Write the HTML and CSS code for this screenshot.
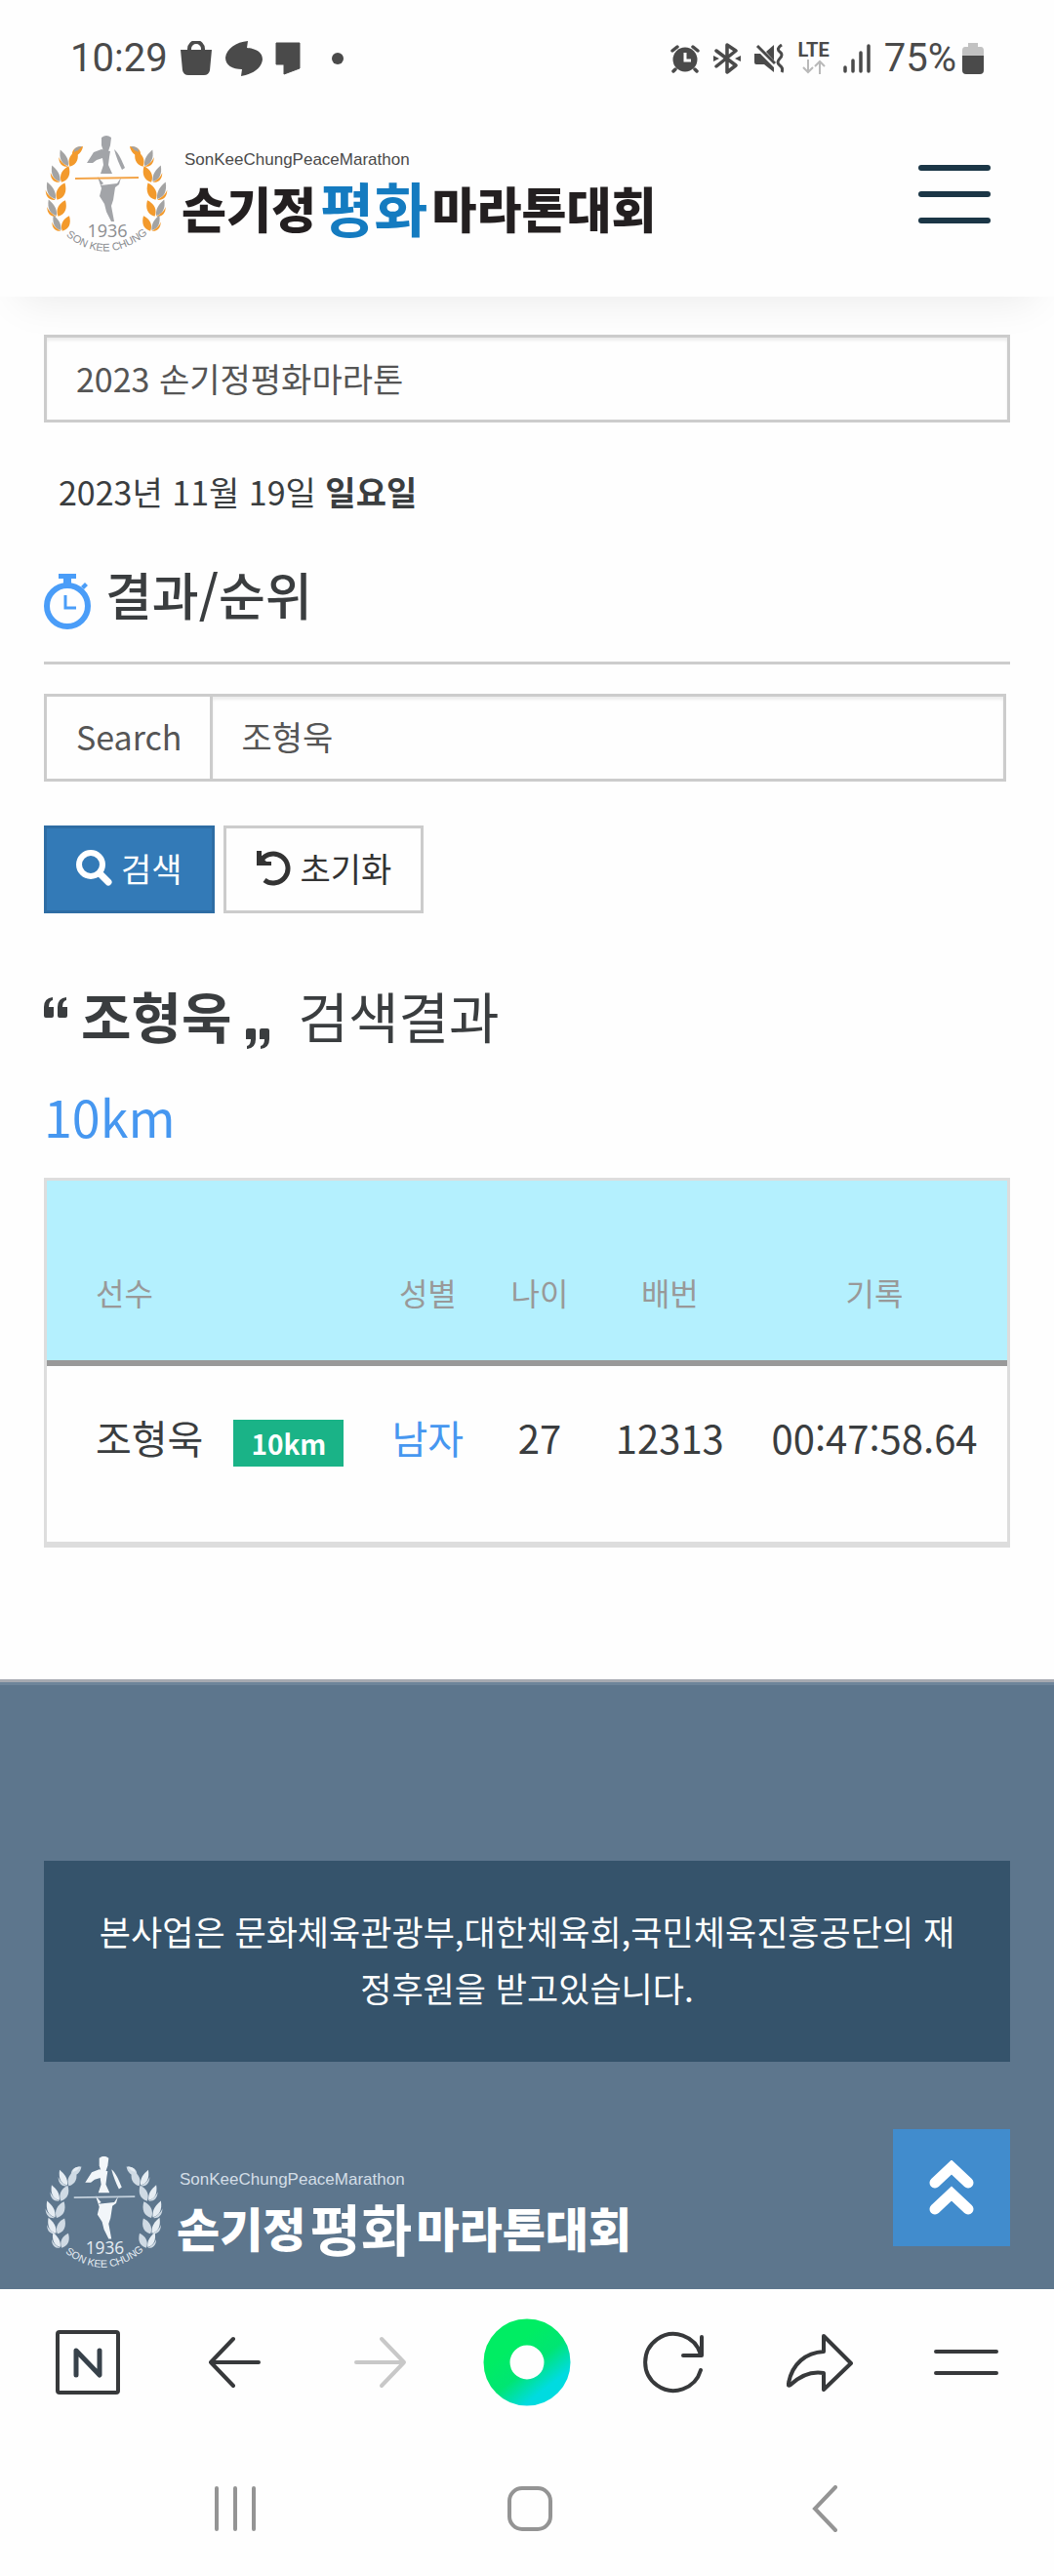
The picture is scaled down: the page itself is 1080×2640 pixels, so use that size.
FILE: index.html
```html
<!DOCTYPE html>
<html lang="ko">
<head>
<meta charset="utf-8">
<meta name="viewport" content="width=device-width, initial-scale=1">
<title>손기정평화마라톤대회</title>
<link rel="stylesheet" href="styles.css">
</head>
<body>

<svg class="defs" aria-hidden="true">
  <symbol id="leaf" viewBox="0 0 26 24" overflow="visible">
    <path d="M13 24C4 22 0 14 2 2C9 8 14 14 13 24Z" fill="var(--leaf-a)"/>
    <path d="M0 12C2 18 7 22 13 25C6 26 0 22 0 12Z" fill="var(--leaf-b)"/>
    <path d="M15 25C11 16 16 7 25 3C28 14 25 22 15 25Z" fill="var(--leaf-b)"/>
  </symbol>
  <symbol id="emblem" viewBox="-1 0 129 120">
    <g id="laurel">
      <path d="M28 21C27 14 32 11 39 11C38 17 34 21 28 21Z" fill="var(--leaf-b)"/>
      <path d="M30 19C29 13 32 11 38 11Z" fill="var(--leaf-a)"/>
      <use href="#leaf" x="14" y="13" width="20" height="18"/>
      <use href="#leaf" x="5" y="29" width="21" height="18"/>
      <use href="#leaf" x="0" y="46" width="22" height="19"/>
      <use href="#leaf" x="1" y="64" width="22" height="18"/>
      <use href="#leaf" x="5" y="80" width="23" height="17"/>
    </g>
    <use href="#laurel" transform="matrix(-1 0 0 1 126 0)"/>
    <g fill="var(--figure)">
      <path d="M58 2Q63-2 68 2L67 10L65 16H60L58 10Z"/>
      <path d="M58 14L67 16L66 22L65 30L69 39H57L60 30L59 23L53 25L49 28L43 28L50 17Z"/>
      <path d="M71 14C76 18 79 26 82 33L79 35C76 29 73 22 71 14Z"/>
      <path d="M54 42L60 49L57 51L74 49L78 43L76 50L72 53L70 66L68 72L71 88H68L63 78L61 70L56 62L58 54Z"/>
    </g>
    <path d="M31 44L96 43" stroke="var(--tape)" stroke-width="2"/>
  </symbol>
  <path id="emblem-arc" d="M21 102Q63 136 106 100" fill="none"/>
</svg>

<div class="status-bar">
  <div class="status-left">
    <span class="status-text">10:29</span>
    <svg width="34" height="36" viewBox="0 0 34 36"><path d="M1 9H33L31 30Q30 35 25 35H9Q4 35 3 30Z" fill="#4a4a4a"/><path d="M10 11V8A7 7 0 0 1 24 8V11" fill="none" stroke="#4a4a4a" stroke-width="4"/></svg>
    <svg width="40" height="38" viewBox="0 0 40 38"><path d="M24 1L23 8C33 9 39 13 39 20C38 29 29 35 17 37L18 30C8 30 1 26 1 18C2 9 12 2 24 1Z" fill="#4a4a4a"/></svg>
    <svg width="26" height="34" viewBox="0 0 26 34"><path d="M1 1H25V27L9 33V23H1Z" fill="#4a4a4a" stroke="#4a4a4a"/></svg>
    <svg class="ic-dot" width="12" height="12" viewBox="0 0 12 12"><circle cx="6" cy="6" r="6" fill="#4a4a4a"/></svg>
  </div>
  <div class="status-right">
    <svg width="30" height="30" viewBox="0 0 30 30"><circle cx="15" cy="16" r="12.500" fill="#4a4a4a"/><path d="M2 7L7 3M28 7L23 3M5 26L3 28M25 26L27 28" stroke="#4a4a4a" stroke-width="3.500" stroke-linecap="round"/><path d="M15 9V17H21" fill="none" stroke="#fff" stroke-width="3"/></svg>
    <svg width="28" height="32" viewBox="0 0 28 32"><path d="M3 8L23 23L14 30V2L23 8L3 24" fill="none" stroke="#4a4a4a" stroke-width="3.500" stroke-linejoin="round" stroke-linecap="round"/><path d="M0 13L6 16L0 19ZM28 13L22 16L28 19Z" fill="#4a4a4a"/></svg>
    <svg width="30" height="30" viewBox="0 0 30 30"><path d="M0 10H6L20 24V29L10 21H2Q0 21 0 19ZM20 1V17L12 8Z" fill="#4a4a4a"/><path d="M3 2L21 20" stroke="#4a4a4a" stroke-width="3"/><path d="M28 1Q22 5 26 8T26 15T26 22T28 29" fill="none" stroke="#4a4a4a" stroke-width="3"/></svg>
    <span class="lte"><span>LTE</span><svg width="24" height="15" viewBox="0 0 24 15"><path d="M6 0V13M1 8L6 13L11 8M18 15V2M13 7L18 2L23 7" fill="none" stroke="#b9b9b9" stroke-width="2"/></svg></span>
    <svg width="28" height="30" viewBox="0 0 28 30"><path d="M2 24V28M10 17V28M18 9V28M26 2V28" stroke="#4a4a4a" stroke-width="3.500" stroke-linecap="round"/></svg>
    <span class="battery"><span class="status-text">75%</span><svg width="22" height="32" viewBox="0 0 22 32"><path d="M6 0H16V4H19Q22 4 22 8V13H0V8Q0 4 3 4H6Z" fill="#c2c2c2"/><path d="M0 13H22V28Q22 32 18 32H4Q0 32 0 28Z" fill="#4a4a4a"/></svg></span>
  </div>
</div>

<header class="site-header">
  <a class="logo logo-color" href="#">
    <svg class="logo-emblem" viewBox="-1 0 129 120" aria-hidden="true">
      <use href="#emblem" x="-1" y="0" width="129" height="120"/>
      <text class="emblem-year" x="64" y="104" text-anchor="middle">1936</text>
      <text class="emblem-name" text-anchor="middle"><textPath href="#emblem-arc" startOffset="50%">SON KEE CHUNG</textPath></text>
    </svg>
    <span class="logo-words">
      <span class="logo-sub">SonKeeChungPeaceMarathon</span>
      <span class="logo-title"><span>손기정</span><span class="logo-accent">평화</span><span>마라톤대회</span></span>
    </span>
  </a>
  <button class="menu-button" type="button" aria-label="메뉴"><span></span><span></span><span></span></button>
</header>

<main>
  <select class="field" aria-label="대회"><option>2023 손기정평화마라톤</option></select>
  <p class="race-date">2023년 11월 19일 <strong>일요일</strong></p>
  <h1 class="page-title">
    <svg width="48" height="57" viewBox="0 0 48 57" aria-hidden="true"><circle cx="24" cy="33" r="21" fill="none" stroke="#4a9df8" stroke-width="6"/><path d="M15 0H33V5H28V11H20V5H15ZM38 13L42 9L45 12L41 16Z" fill="#4a9df8"/><path d="M22 22V35H33" fill="none" stroke="#4a9df8" stroke-width="3"/></svg>
    <span>결과/순위</span>
  </h1>

  <form class="search">
    <div class="search-group">
      <label for="q">Search</label>
      <input id="q" class="field" type="text" value="조형욱">
    </div>
    <div class="actions">
      <button class="btn btn-primary" type="submit"><svg width="37" height="37" viewBox="0 0 37 37" aria-hidden="true"><circle cx="15" cy="15" r="12" fill="none" stroke="#fff" stroke-width="6"/><path d="M24 24L33 33" stroke="#fff" stroke-width="7" stroke-linecap="round"/></svg><span>검색</span></button>
      <button class="btn" type="reset"><svg width="37" height="37" viewBox="0 0 37 37" aria-hidden="true"><path d="M6 10A15 15 0 1 1 9 31" fill="none" stroke="#333" stroke-width="5"/><path d="M1 1H6V7L11 12H16V16H1Z" fill="#333"/></svg><span>초기화</span></button>
    </div>
  </form>

  <h2 class="result-title">
    <svg class="quote-open" width="24" height="21" viewBox="0 0 24 21" aria-hidden="true"><path id="quote" d="M9 0V3Q5 4 5 10H10V19Q10 21 8 21H2Q0 21 0 19V10Q0 1 9 0ZM23 0V3Q19 4 19 10H24V19Q24 21 22 21H16Q14 21 14 19V10Q14 1 23 0Z" fill="#3a3d3f"/></svg>
    <strong>조형욱</strong>
    <svg class="quote-close" width="24" height="21" viewBox="0 0 24 21" aria-hidden="true"><use href="#quote" transform="rotate(180 12 10.500)"/></svg>
    <span>검색결과</span>
  </h2>
  <h3 class="course">10km</h3>

  <table class="results">
    <thead>
      <tr><th scope="col">선수</th><th scope="col">성별</th><th scope="col">나이</th><th scope="col">배번</th><th scope="col">기록</th></tr>
    </thead>
    <tbody>
      <tr>
        <td><div class="runner"><span>조형욱</span><span class="badge">10km</span></div></td>
        <td class="gender">남자</td><td>27</td><td>12313</td><td>00:47:58.64</td>
      </tr>
    </tbody>
  </table>
</main>

<footer class="site-footer">
  <p class="notice">본사업은 문화체육관광부,대한체육회,국민체육진흥공단의 재정후원을 받고있습니다.</p>
  <a class="logo logo-white" href="#">
    <svg class="logo-emblem" viewBox="-1 0 129 120" aria-hidden="true">
      <use href="#emblem" x="-1" y="0" width="129" height="120"/>
      <text class="emblem-year" x="64" y="104" text-anchor="middle">1936</text>
      <text class="emblem-name" text-anchor="middle"><textPath href="#emblem-arc" startOffset="50%">SON KEE CHUNG</textPath></text>
    </svg>
    <span class="logo-words">
      <span class="logo-sub">SonKeeChungPeaceMarathon</span>
      <span class="logo-title"><span>손기정</span><span class="logo-accent">평화</span><span>마라톤대회</span></span>
    </span>
  </a>
  <button class="to-top" type="button" aria-label="맨 위로"><svg width="46" height="57" viewBox="0 0 46 57"><path d="M6 23L23 7L40 23M6 50L23 34L40 50" fill="none" stroke="#fff" stroke-width="11" stroke-linecap="round" stroke-linejoin="miter"/></svg></button>
</footer>

<nav class="browser-bar" aria-label="브라우저">
  <button type="button" aria-label="홈"><svg width="66" height="66" viewBox="0 0 66 66"><rect x="2" y="2" width="62" height="62" rx="2" fill="none" stroke="#37393b" stroke-width="4"/><path d="M21 46V21L45 46V21" fill="none" stroke="#37414a" stroke-width="5" stroke-linecap="round" stroke-linejoin="round"/></svg></button>
  <button type="button" aria-label="뒤로"><svg width="54" height="54" viewBox="0 0 54 54"><path d="M52 27H3M26 3L3 27L26 51" fill="none" stroke="#37393b" stroke-width="4" stroke-linecap="round" stroke-linejoin="round"/></svg></button>
  <button type="button" aria-label="앞으로"><svg width="54" height="54" viewBox="0 0 54 54"><path d="M2 27H51M28 3L51 27L28 51" fill="none" stroke="#c8c8c8" stroke-width="4" stroke-linecap="round" stroke-linejoin="round"/></svg></button>
  <button type="button" aria-label="그린닷"><svg width="90" height="90" viewBox="0 0 90 90"><defs><linearGradient id="dot-fill" x1=".3" y1=".2" x2=".85" y2=".9"><stop offset="0" stop-color="#00ed63"/><stop offset=".5" stop-color="#00e573"/><stop offset="1" stop-color="#00dbe0"/></linearGradient></defs><circle cx="45" cy="45" r="31" fill="none" stroke="url(#dot-fill)" stroke-width="27"/></svg></button>
  <button type="button" aria-label="새로고침"><svg width="64" height="64" viewBox="0 0 64 64"><path d="M60 40A29 29 0 1 1 60 24" fill="none" stroke="#37393b" stroke-width="4" stroke-linecap="round"/><path d="M61 6V25H42" fill="none" stroke="#37393b" stroke-width="4" stroke-linecap="round" stroke-linejoin="round"/></svg></button>
  <button type="button" aria-label="공유"><svg width="68" height="60" viewBox="0 0 68 60"><path d="M38 3L66 31L38 58V41Q20 38 4 53Q1 55 2 51C6 31 20 20 38 19Z" fill="none" stroke="#37393b" stroke-width="4" stroke-linejoin="round"/></svg></button>
  <button type="button" aria-label="메뉴"><svg width="66" height="26" viewBox="0 0 66 26"><path d="M2 2H64M2 24H64" stroke="#37393b" stroke-width="4" stroke-linecap="round"/></svg></button>
</nav>

<nav class="system-bar" aria-label="시스템">
  <button type="button" aria-label="최근 앱"><svg width="42" height="46" viewBox="0 0 42 46"><path d="M2 2V44M21 2V44M40 2V44" stroke="#949494" stroke-width="4" stroke-linecap="round"/></svg></button>
  <button type="button" aria-label="홈 화면"><svg width="46" height="46" viewBox="0 0 46 46"><rect x="2" y="2" width="42" height="42" rx="13" fill="none" stroke="#949494" stroke-width="4"/></svg></button>
  <button type="button" aria-label="이전"><svg width="26" height="48" viewBox="0 0 26 48"><path d="M24 2L3 24L24 46" fill="none" stroke="#949494" stroke-width="4" stroke-linecap="round"/></svg></button>
</nav>
</body>
</html>
```
FILE: styles.css
```css
* {
  box-sizing: border-box;
}

body {
  margin: 0;
  min-height: 100vh;
  display: flex;
  flex-direction: column;
  background: #fefefe;
  color: #3a3d3f;
  font-family: "Noto Sans CJK KR", sans-serif;
  font-size: 34px;
  line-height: 58px;
}

h1, h2, h3, p {
  margin: 0;
}

button, input, select {
  margin: 0;
  font: inherit;
  color: inherit;
  border-radius: 0;
}

svg {
  display: block;
  flex: none;
}

a {
  text-decoration: none;
}

.defs {
  position: absolute;
  width: 0;
  height: 0;
}

/* Status bar */
.status-bar {
  display: flex;
  justify-content: space-between;
  align-items: center;
  height: 119px;
  padding: 0 72px;
  color: #4a4a4a;
}

.status-left,
.status-right,
.battery {
  display: flex;
  align-items: center;
}

.status-left {
  gap: 12px;
}

.status-right {
  gap: 14px;
}

.battery {
  gap: 6px;
}

.status-text {
  font-family: Roboto, sans-serif;
  font-size: 40px;
  font-weight: 400;
}

.ic-dot {
  margin-left: 20px;
}

.lte {
  display: flex;
  flex-direction: column;
  align-items: center;
  gap: 2px;
  font-family: Roboto, sans-serif;
  font-size: 20px;
  font-weight: 700;
  line-height: 16px;
}

/* Header */
.site-header {
  display: flex;
  justify-content: space-between;
  align-items: center;
  padding: 20px 65px 45px 45px;
  background: #fefefe;
  box-shadow: 0 25px 40px -20px rgba(0, 0, 0, .08);
}

.logo {
  display: flex;
  align-items: flex-start;
}

.logo-color {
  --leaf-a: #a3a3a3;
  --leaf-b: #f39a2c;
  --figure: #a2a4a8;
  --tape: #f3a54a;
  --ink: #8b8d90;
  --sub: #4a4a4a;
  --title: #231f20;
  --accent: #147bc0;
  --emblem-width: 129px;
  --emblem-height: 120px;
  --title-size: 50px;
  --accent-size: 60px;
}

.logo-white {
  --leaf-a: #e6edf3;
  --leaf-b: #cfdae4;
  --figure: #f2f6f9;
  --tape: #c3d0dc;
  --ink: #e6edf3;
  --sub: #d4dee7;
  --title: #fff;
  --accent: #fff;
  --emblem-width: 124px;
  --emblem-height: 117px;
  --title-size: 48px;
  --accent-size: 57px;
}

.logo-emblem {
  width: var(--emblem-width);
  height: var(--emblem-height);
}

.emblem-year {
  font: 18px "Open Sans", sans-serif;
  fill: var(--ink);
}

.emblem-name {
  font: 11px "Liberation Sans", sans-serif;
  fill: var(--ink);
}

.logo-words {
  display: flex;
  flex-direction: column;
  gap: 6px;
  padding: 15px 0 0 12px;
}

.logo-sub {
  padding-left: 3px;
  color: var(--sub);
  font-family: "Liberation Sans", sans-serif;
  font-size: 17px;
  line-height: 20px;
}

.logo-title {
  display: flex;
  align-items: center;
  gap: 4px;
  color: var(--title);
  font-size: var(--title-size);
  font-weight: 900;
  line-height: 64px;
}

.logo-accent {
  color: var(--accent);
  font-size: var(--accent-size);
  font-weight: 700;
}

.menu-button {
  display: flex;
  flex-direction: column;
  gap: 21px;
  width: 74px;
  padding: 0;
  border: 0;
  background: none;
}

.menu-button span {
  height: 6px;
  border-radius: 3px;
  background: #1b3646;
}

/* Content */
main {
  padding: 39px 45px 135px;
}

.field {
  display: block;
  width: 100%;
  height: 90px;
  padding: 0 30px;
  border: 3px solid #ccc;
  background: #fefefe;
  box-shadow: inset 0 3px 3px rgba(0, 0, 0, .07);
  color: #555;
  appearance: none;
}

.race-date {
  margin-top: 42px;
  padding-left: 15px;
}

.page-title {
  display: flex;
  align-items: flex-end;
  gap: 15px;
  margin-top: 40px;
  padding-bottom: 33px;
  border-bottom: 3px solid #ccc;
  font-size: 52px;
  font-weight: 500;
  line-height: 72px;
}

.search-group {
  display: flex;
  margin: 30px 4px 0 0;
}

.search-group label {
  display: flex;
  align-items: center;
  padding: 0 28px 3px 30px;
  border: 3px solid #ccc;
  border-right: 0;
  color: #555;
}

.search-group .field {
  flex: 1;
  min-width: 0;
  padding-bottom: 3px;
}

.actions {
  display: flex;
  gap: 9px;
  margin-top: 45px;
}

.btn {
  display: flex;
  align-items: center;
  gap: 9px;
  height: 90px;
  padding: 0 30px 3px;
  border: 3px solid #ccc;
  background: #fefefe;
  color: #333;
}

.btn-primary {
  border-color: #2e6da4;
  background: #337ab7;
  color: #fff;
}

.result-title {
  display: flex;
  gap: 14px;
  margin-top: 69px;
  font-size: 56px;
  font-weight: 400;
  line-height: 70px;
}

.result-title span {
  padding-left: 16px;
}

.quote-open {
  margin-top: 17px;
}

.quote-close {
  align-self: flex-end;
}

.course {
  margin-top: 37px;
  color: #4697f0;
  font-size: 52px;
  font-weight: 400;
  line-height: 64px;
}

/* Results */
.results {
  width: 100%;
  margin-top: 31px;
  border: 3px solid #ddd;
  border-bottom-width: 6px;
  border-spacing: 0;
  white-space: nowrap;
}

.results th {
  padding: 90px 24px 46px;
  border-bottom: 6px solid #999;
  background: #b4f0fe;
  color: #999;
  font-size: 32px;
  font-weight: 400;
  line-height: 48px;
}

.results td {
  padding: 43px 24px 77px;
  font-size: 40px;
  line-height: 60px;
  text-align: center;
}

.results th:first-child,
.results td:first-child {
  padding-left: 50px;
  text-align: left;
}

.results th:last-child,
.results td:last-child {
  padding-right: 30px;
}

.results .gender {
  color: #4697f0;
}

.runner {
  display: flex;
  align-items: flex-end;
  gap: 31px;
}

.badge {
  padding: 0 18px;
  background: #1ab387;
  color: #fff;
  font-size: 28px;
  font-weight: 700;
  line-height: 48px;
}

/* Footer */
.site-footer {
  position: relative;
  padding: 183px 45px 20px;
  border-top: 3px solid #a6a9b1;
  background: #5d768d;
  box-shadow: inset 0 3px #6e859a;
}

.notice {
  padding: 43px 45px 47px;
  background: #35536b;
  color: #fff;
  font-size: 35px;
  text-align: center;
}

.site-footer .logo {
  margin-top: 96px;
}

.to-top {
  position: absolute;
  right: 45px;
  bottom: 44px;
  display: grid;
  place-items: center;
  width: 120px;
  height: 120px;
  padding: 0;
  border: 0;
  background: #418ccd;
}

/* Browser and system navigation */
.browser-bar,
.system-bar {
  display: grid;
  background: #fefefe;
}

.browser-bar {
  grid-template-columns: repeat(7, 1fr);
  height: 150px;
  padding: 0 15px;
}

.system-bar {
  grid-template-columns: repeat(3, 1fr);
  height: 144px;
  padding: 6px 84px 0 90px;
}

.browser-bar button,
.system-bar button {
  display: grid;
  place-items: center;
  padding: 0;
  border: 0;
  background: none;
}
```
